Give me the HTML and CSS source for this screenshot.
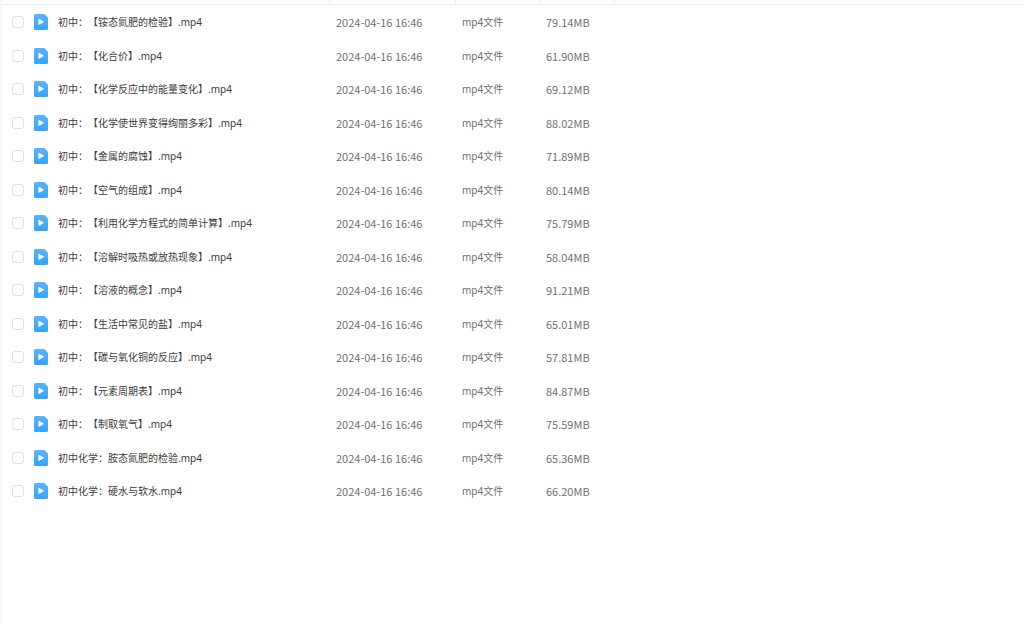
FILE: index.html
```html
<!DOCTYPE html>
<html lang="zh-CN">
<head>
    <meta charset="UTF-8">
    <meta name="viewport" content="width=device-width, initial-scale=1.0">
    <title>文件列表</title>
    <link rel="stylesheet" href="styles.css">
</head>
<body>
    <svg class="sprite" aria-hidden="true">
        <defs>
            <linearGradient id="iconFill" x1="0" y1="0" x2="0" y2="1">
                <stop offset="0" stop-color="#5cb3fd"/>
                <stop offset="1" stop-color="#31a5fd"/>
            </linearGradient>
        </defs>
        <symbol id="videoIcon" viewBox="0 0 14 16">
            <path d="M1.6 0H9.8Q10.5 0 11 0.5L13.4 2.9Q14 3.5 14 4.2V14.4Q14 16 12.4 16H1.6Q0 16 0 14.4V1.6Q0 0 1.6 0Z" fill="url(#iconFill)"/>
            <path d="M4.4 5.3Q4.4 4.5 5.2 4.9L9.5 7.3Q10.2 7.8 9.5 8.2L5.2 10.7Q4.4 11.1 4.4 10.3Z" fill="#fff"/>
        </symbol>
    </svg>

    <main class="file-panel">
        <table class="file-table">
            <colgroup>
                <col class="col-name">
                <col class="col-date">
                <col class="col-type">
                <col class="col-size">
                <col>
            </colgroup>
            <thead>
                <tr>
                    <th></th>
                    <th></th>
                    <th></th>
                    <th></th>
                    <th></th>
                </tr>
            </thead>
            <tbody id="fileList"></tbody>
        </table>
    </main>

    <script>
        const files = [
            ['初中：【铵态氮肥的检验】.mp4', '79.14MB'],
            ['初中：【化合价】.mp4', '61.90MB'],
            ['初中：【化学反应中的能量变化】.mp4', '69.12MB'],
            ['初中：【化学使世界变得绚丽多彩】.mp4', '88.02MB'],
            ['初中：【金属的腐蚀】.mp4', '71.89MB'],
            ['初中：【空气的组成】.mp4', '80.14MB'],
            ['初中：【利用化学方程式的简单计算】.mp4', '75.79MB'],
            ['初中：【溶解时吸热或放热现象】.mp4', '58.04MB'],
            ['初中：【溶液的概念】.mp4', '91.21MB'],
            ['初中：【生活中常见的盐】.mp4', '65.01MB'],
            ['初中：【碳与氧化铜的反应】.mp4', '57.81MB'],
            ['初中：【元素周期表】.mp4', '84.87MB'],
            ['初中：【制取氧气】.mp4', '75.59MB'],
            ['初中化学：胺态氮肥的检验.mp4', '65.36MB'],
            ['初中化学：硬水与软水.mp4', '66.20MB']
        ];

        // One table row per file
        document.getElementById('fileList').innerHTML = files.map(([name, size], i) => `
            <tr>
                <td>
                    <div class="file">
                        <input type="checkbox" id="file${i}">
                        <svg class="file-icon" aria-hidden="true"><use href="#videoIcon"/></svg>
                        <label for="file${i}">${name}</label>
                    </div>
                </td>
                <td class="number">2024-04-16 16:46</td>
                <td>mp4文件</td>
                <td class="number">${size}</td>
                <td></td>
            </tr>`).join('');
    </script>
</body>
</html>
```
FILE: styles.css
```css
* {
    box-sizing: border-box;
}
body {
    margin: 0;
    background-color: #fff;
    color: #707070;
    font-family: "Noto Sans", "Noto Sans CJK SC", sans-serif;
    font-size: 10px;
    line-height: 16px;
    text-spacing-trim: space-all;
}
.sprite {
    position: absolute;
    width: 0;
    height: 0;
}
.file-panel {
    min-height: 100vh;
    border-left: 2px solid #f7f7f7;
}
.file-table {
    width: 100%;
    table-layout: fixed;
    border-collapse: separate;
    border-spacing: 0;
}
.col-name {
    width: 327px;
}
.col-date {
    width: 126px;
}
.col-type {
    width: 84px;
}
.col-size {
    width: 75px;
}
th {
    height: 5px;
    padding: 0;
    border-bottom: 1px solid #f0f0f2;
}
th + th {
    border-left: 1px solid #ececf0;
}
td {
    height: 34px;
    padding: 0 7px;
    white-space: nowrap;
}
tbody tr:nth-child(even) td {
    height: 33px;
}
td:first-child {
    padding-left: 10px;
}
.number {
    font-family: "Noto Sans CJK SC", sans-serif;
    font-size: 11px;
}
.file {
    display: flex;
    align-items: center;
}
.file input {
    appearance: none;
    width: 12px;
    height: 12px;
    margin: 0 10px 0 0;
    border: 1px solid #e0e0e0;
    border-radius: 3px;
    background-color: #fff;
}
.file input:checked {
    border-color: #31a5fd;
    background-color: #31a5fd;
}
.file-icon {
    width: 14px;
    height: 16px;
    margin-right: 10px;
}
.file label {
    color: #3c3c3c;
}
```
